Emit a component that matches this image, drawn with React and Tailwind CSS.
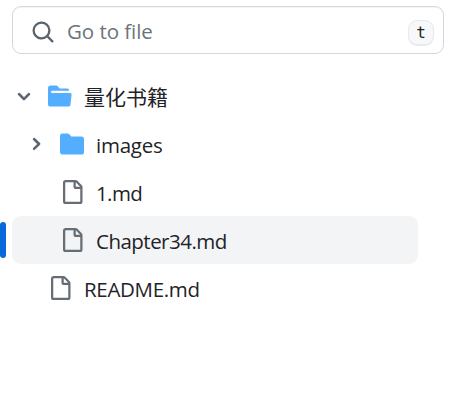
const PATHS = {
  search:
    'M10.68 11.74a6 6 0 0 1-7.922-8.982 6 6 0 0 1 8.982 7.922l3.04 3.04a.749.749 0 0 1-.326 1.275.749.749 0 0 1-.734-.215ZM11.5 7a4.499 4.499 0 1 0-8.997 0A4.499 4.499 0 0 0 11.5 7Z',
  file:
    'M2 1.75C2 .784 2.784 0 3.75 0h6.586c.464 0 .909.184 1.237.513l2.914 2.914c.329.328.513.773.513 1.237v9.586A1.75 1.75 0 0 1 13.25 16h-9.5A1.75 1.75 0 0 1 2 14.25Zm1.75-.25a.25.25 0 0 0-.25.25v12.5c0 .138.112.25.25.25h9.5a.25.25 0 0 0 .25-.25V6h-2.75A1.75 1.75 0 0 1 9 4.25V1.5Zm6.75.062V4.25c0 .138.112.25.25.25h2.688l-.011-.013-2.914-2.914-.013-.011Z',
  folder:
    'M1.75 1A1.75 1.75 0 0 0 0 2.75v10.5C0 14.216.784 15 1.75 15h12.5A1.75 1.75 0 0 0 16 13.25v-8.5A1.75 1.75 0 0 0 14.25 3H7.5a.25.25 0 0 1-.2-.1l-.9-1.2C6.07 1.26 5.55 1 5 1H1.75Z',
  folderOpen:
    'M.513 1.513A1.75 1.75 0 0 1 1.75 1h3.5c.55 0 1.07.26 1.4.7l.9 1.2a.25.25 0 0 0 .2.1H13a1 1 0 0 1 1 1v.5H2.75a.75.75 0 0 0 0 1.5h11.978a1 1 0 0 1 .994 1.117L15 13.25A1.75 1.75 0 0 1 13.25 15H1.75A1.75 1.75 0 0 1 0 13.25V2.75c0-.464.184-.91.513-1.237Z',
  down:
    'M6 8.825c-.2 0-.4-.1-.5-.2l-3.3-3.3c-.3-.3-.3-.8 0-1.1.3-.3.8-.3 1.1 0l2.7 2.7 2.7-2.7c.3-.3.8-.3 1.1 0 .3.3.3.8 0 1.1l-3.2 3.2c-.2.2-.4.3-.6.3Z',
  right:
    'M4.7 10c-.2 0-.4-.1-.5-.2-.3-.3-.3-.8 0-1.1L6.9 6 4.2 3.3c-.3-.3-.3-.8 0-1.1.3-.3.8-.3 1.1 0l3.3 3.2c.3.3.3.8 0 1.1L5.3 9.7c-.2.2-.4.3-.6.3Z',
};

function Icon({ name, box = 16, className }) {
  return (
    <svg viewBox={`0 0 ${box} ${box}`} fill="currentColor" className={`shrink-0 ${className}`} aria-hidden="true">
      <path d={PATHS[name]} />
    </svg>
  );
}

const ROWS = [
  { label: '量化书籍', icon: 'folderOpen', chevron: 'down', nested: false, text: 'text-[21px]' },
  { label: 'images', icon: 'folder', chevron: 'right', nested: true, text: 'text-[20.5px] tracking-[-0.25px]' },
  { label: '1.md', icon: 'file', nested: true, text: 'text-[20.5px] tracking-[-0.6px]' },
  { label: 'Chapter34.md', icon: 'file', nested: true, selected: true, text: 'text-[20.5px] tracking-[-0.52px]' },
  { label: 'README.md', icon: 'file', nested: false, text: 'text-[20.5px] tracking-[-0.32px]' },
];

function Row({ row }) {
  return (
    <li
      className={`relative flex h-12 items-center rounded-[9px] ${row.nested ? 'pl-[15px]' : 'pl-[3px]'} ${
        row.selected ? 'bg-[#f3f4f6]' : ''
      }`}
    >
      {row.selected && <span className="absolute top-1.5 -left-3 h-9 w-1.5 rounded-[3px] bg-[#0969da]" />}
      <span className="flex w-[33px] shrink-0 text-[#59636e]">
        {row.chevron && (
          <Icon name={row.chevron} box={12} className="size-[18px] stroke-current stroke-[0.2]" />
        )}
      </span>
      <Icon name={row.icon} className={`size-6 ${row.icon === 'file' ? 'text-[#656d76]' : 'text-[#54aeff]'}`} />
      <span className={`ml-3 whitespace-nowrap pt-0.5 leading-8 text-[#1f2328] ${row.text}`}>{row.label}</span>
    </li>
  );
}

export default function App() {
  return (
    <div className="h-[419px] w-[462px] overflow-hidden bg-white pt-1.5 pl-3 font-['Open_Sans','Noto_Sans_CJK_SC',sans-serif]">
      <div className="flex h-12 w-[432px] items-center rounded-[9px] border border-[#d1d9e0] pr-[9px] pl-[18px] shadow-[inset_0_1px_0_#f3f5f7]">
        <Icon name="search" className="mt-[3px] size-6 text-[#59636e]" />
        <span className="ml-3 grow pt-0.5 text-[20.5px] leading-8 tracking-[-0.05px] text-[#6b737c]">Go to file</span>
        <kbd className="mt-1.5 flex h-[26px] w-[26px] items-center justify-center rounded-[9px] border border-[#e6eaef] bg-[#f6f8fa] font-['DejaVu_Sans_Mono',monospace] text-[16px] leading-none text-[#1f2328] shadow-[inset_0_-1px_0_#e6eaef]">
          t
        </kbd>
      </div>
      <ul className="mt-[18px] w-[406px]">
        {ROWS.map((row) => (
          <Row key={row.label} row={row} />
        ))}
      </ul>
    </div>
  );
}
